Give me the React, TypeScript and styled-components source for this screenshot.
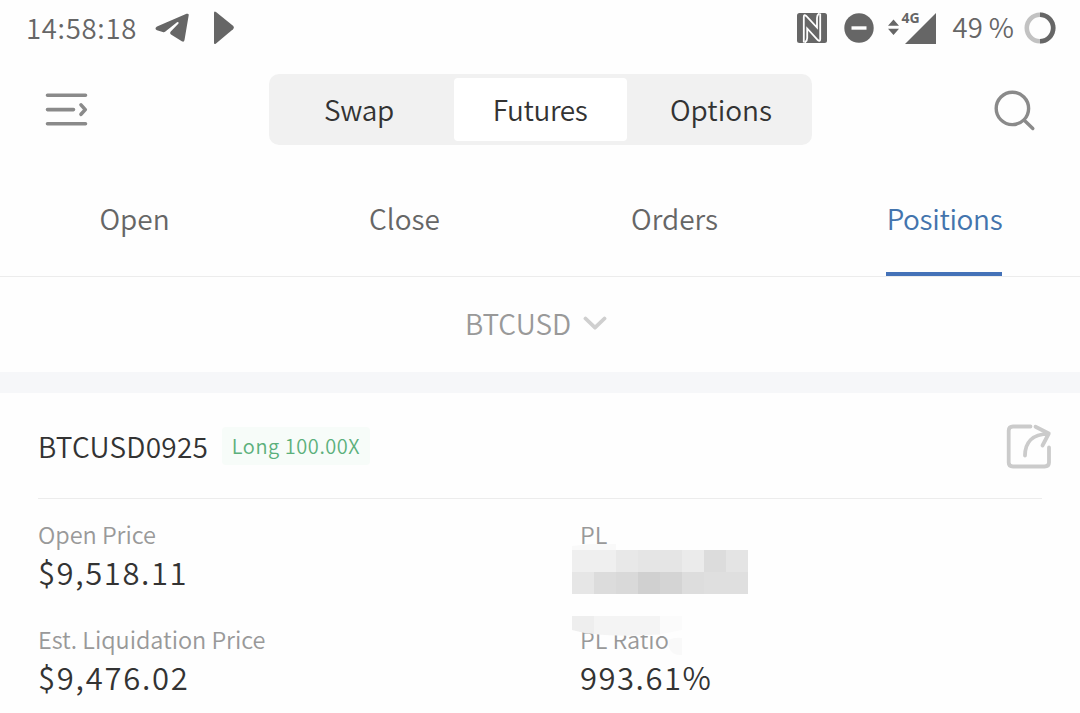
import React from 'react';
import styled, { createGlobalStyle } from 'styled-components';

const GlobalStyle = createGlobalStyle`
  * {
    box-sizing: border-box;
  }

  body {
    margin: 0;
    background: #fefefe;
    color: #333333;
    font-family: 'Noto Sans CJK SC', 'Open Sans', sans-serif;
  }

  svg {
    display: block;
    flex: none;
  }
`;

interface TextProps {
  $size: number;
  $color?: string;
  $spacing?: number;
  $weight?: number;
}

const Text = styled.span<TextProps>`
  font-size: ${props => props.$size}px;
  color: ${props => props.$color || '#333333'};
  letter-spacing: ${props => props.$spacing || 0}px;
  font-weight: ${props => props.$weight || 350};
  line-height: 1;
  white-space: nowrap;
`;

const Screen = styled.main`
  width: 1080px;
  height: 713px;
  overflow: hidden;
`;

const StatusBar = styled.header`
  display: flex;
  align-items: center;
  justify-content: space-between;
  height: 56px;
  padding: 0 24px 0 26px;
`;

const StatusGroup = styled.div`
  display: flex;
  align-items: center;
`;

const StatusItem = styled.div<{ $before: number }>`
  margin-left: ${props => props.$before}px;
`;

const Toolbar = styled.div`
  display: flex;
  align-items: center;
  justify-content: space-between;
  height: 107px;
  padding: 0 44px 0 44px;
`;

const Segments = styled.div`
  display: flex;
  justify-content: space-between;
  width: 543px;
  height: 71px;
  padding: 4px 0;
  margin-right: 4px;
  border-radius: 10px;
  background: #f1f1f1;
`;

const Segment = styled.button<{ $active?: boolean }>`
  flex: 0 0 ${props => (props.$active ? 173 : 181)}px;
  padding: 0;
  border: 0;
  border-radius: 4px;
  background: ${props => (props.$active ? '#ffffff' : 'transparent')};
  font-family: inherit;
`;

const Tabs = styled.nav`
  display: grid;
  grid-template-columns: repeat(4, 1fr);
  height: 114px;
  border-bottom: 1px solid #ececec;
`;

const Tab = styled.a<{ $active?: boolean }>`
  display: flex;
  justify-content: center;
  justify-self: center;
  width: 116px;
  margin-right: 2px;
  padding: 41px 0 0 1px;
  border-bottom: 4px solid ${props => (props.$active ? '#4472b8' : 'transparent')};
`;

const PairSelect = styled.div`
  display: flex;
  align-items: center;
  justify-content: center;
  gap: 12px;
  height: 95px;
  padding: 0 8px 3px 0;
`;

const Divider = styled.div`
  height: 21px;
  background: #f6f7f9;
`;

const Card = styled.section`
  padding: 0 38px;
`;

const CardHeader = styled.div`
  display: flex;
  align-items: center;
  height: 106px;
  border-bottom: 1px solid #ececec;
`;

const Contract = styled.div`
  display: flex;
  width: 184px;
  padding-top: 1px;
`;

const Badge = styled.span`
  display: flex;
  align-items: center;
  justify-content: center;
  width: 148px;
  height: 38px;
  border-radius: 4px;
  background: #f7fcf9;
`;

const ShareButton = styled.div`
  margin: 0 -10px 0 auto;
`;

const Metrics = styled.div`
  display: grid;
  grid-template-columns: 542px 1fr;
  grid-auto-rows: 105px;
  padding-top: 24px;
`;

const Metric = styled.div`
  position: relative;
  display: flex;
  flex-direction: column;
  gap: 9px;
`;

const Redaction = styled.svg`
  position: absolute;
  left: -20px;
  top: -5px;
`;

const MenuIcon = () => (
  <svg width="46" height="36" viewBox="0 0 46 36" fill="none" stroke="#8a8a8a" strokeWidth="3.6" strokeLinecap="round" strokeLinejoin="round">
    <path d="M3.5 3.2H41.5M3.5 17.6H29.5M3.5 31.8H41.5M37 12.9L41.3 17.6L37 22.3" />
  </svg>
);

const SearchIcon = () => (
  <svg width="42" height="42" viewBox="0 0 42 42" fill="none" stroke="#8a8a8a" strokeWidth="3.4" strokeLinecap="round">
    <circle cx="18.4" cy="19.4" r="16.2" />
    <path d="M30.5 31.5L38.8 39.5" />
  </svg>
);

const TelegramIcon = () => (
  <svg width="34" height="30" viewBox="0 0 34 30" fill="#666666">
    <path d="M2 13.5L31.5.8Q34 .2 33.7 2.2L29.5 27Q29 29.5 26.8 28.2L16 21.5Q14.4 20.2 15.8 18.6L23.3 10.7Q24.3 8.6 22 9.2L10.4 18.6Q9.2 19.6 7.7 19.1L2 17.2Q-1 15.4 2 13.5Z" />
  </svg>
);

const PlayIcon = () => (
  <svg width="22" height="34" viewBox="0 0 22 34" fill="#666666">
    <path d="M1 2Q1-.6 3 1L20 14.8Q21.8 16.6 20 18.2L3 32.5Q1 34 1 31.5Z" />
  </svg>
);

const NfcIcon = () => (
  <svg width="30" height="30" viewBox="0 0 30 30" fill="none">
    <rect width="30" height="30" rx="2.5" fill="#666666" />
    <g stroke="#fefefe" strokeWidth="1.8">
      <path d="M6.8 29.5V4C6.8 1.6 7.9 1.8 9.2 3L20 14.5V5C20 2.6 20.7 1.2 22.5 .4" />
      <path d="M23.2 .5V26C23.2 28.4 22.1 28.2 20.8 27L10.2 15.5V25C10.2 27.4 9.4 28.8 7.5 29.6" />
    </g>
  </svg>
);

const DndIcon = () => (
  <svg width="30" height="30" viewBox="0 0 30 30">
    <circle cx="15" cy="15" r="14.7" fill="#666666" />
    <path d="M7.5 15H22.5" stroke="#fefefe" strokeWidth="3.4" />
  </svg>
);

const SignalMark = styled.div`
  position: relative;
`;

const NetworkType = styled.span`
  position: absolute;
  left: 14px;
  top: -1px;
  color: #666666;
  font: 700 14px/15px 'Open Sans', sans-serif;
`;

const SignalIcon = () => (
  <SignalMark>
    <svg width="48" height="34" viewBox="0 0 48 34" fill="#666666">
      <path d="M5.5 8.5L11 14.7H0ZM5.5 24L0 17.8H11ZM48 2V33H17Z" />
    </svg>
    <NetworkType>4G</NetworkType>
  </SignalMark>
);

const BatteryRing = () => (
  <svg width="32" height="32" viewBox="0 0 32 32" fill="none" strokeWidth="4.6">
    <circle cx="16" cy="16" r="13.2" stroke="#c2c2c2" />
    <path d="M16 2.8A13.2 13.2 0 0 1 16 29.2" stroke="#666666" />
  </svg>
);

const ChevronIcon = () => (
  <svg width="24" height="16" viewBox="0 0 24 16" fill="none" stroke="#cfcfcf" strokeWidth="3.8" strokeLinecap="round" strokeLinejoin="round">
    <path d="M2.5 3.5L12 12.7L21.5 3.5" />
  </svg>
);

const ShareIcon = () => (
  <svg width="46" height="46" viewBox="0 0 46 46" fill="none" stroke="#cbcbcb" strokeWidth="3.8" strokeLinecap="round" strokeLinejoin="round">
    <path d="M24.5 3.5H7Q2.7 3.5 2.7 7.5V39.5Q2.7 43.5 7 43.5H38.5Q43 43.5 43 39.5V24.5" />
    <path d="M19 32.5C19 20 26 10.8 42.5 10.8M29.5 3.7L42.8 10.5L36.5 22.5" />
  </svg>
);

const cells = [
  ['#efefef', '#efefef', '#e8e8e8', '#e5e5e5', '#e5e5e5', '#ebebeb', '#dcdcdc', '#e4e4e4'],
  ['#e6e6e6', '#dcdcdc', '#d9d9d9', '#d0d0d0', '#d4d4d4', '#dddddd', '#dfdfdf', '#dfdfdf'],
];

const HiddenValue = () => (
  <Redaction width="200" height="140" viewBox="560 518 200 140">
    <path d="M572 546L590 544H616V550H572Z" fill="#f9f9f9" />
    {cells.map((row, y) =>
      row.map((fill, x) => (
        <rect key={`${x}-${y}`} x={572 + x * 22} y={550 + y * 22} width="22" height="22" fill={fill} />
      ))
    )}
  </Redaction>
);

const RatioCover = () => (
  <Redaction width="200" height="140" viewBox="560 623 200 140" overflow="visible">
    <path d="M572 616H594V634Q582 633 572 630Z" fill="#eeeeee" />
    <path d="M594 616H660V634.5Q620 637 594 634Z" fill="#f4f4f4" />
    <path d="M660 616H682V630L660 634.5Z" fill="#fbfbfb" />
    <path d="M668 640Q675 637 682 638V655Q668 656 668 640Z" fill="#f9f9f9" />
  </Redaction>
);

const metrics = [
  { label: 'Open Price', value: '$9,518.11', spacing: 1.6 },
  { label: 'PL', hidden: true },
  { label: 'Est. Liquidation Price', value: '$9,476.02', spacing: 1.75 },
  { label: 'PL Ratio', value: '993.61%', spacing: 1.5, covered: true },
];

const App: React.FC = () => {
  return (
    <Screen>
      <GlobalStyle />
      <StatusBar>
        <StatusGroup>
          <Text $size={27.5} $color="#666666" $spacing={0.7}>14:58:18</Text>
          <StatusItem $before={18}><TelegramIcon /></StatusItem>
          <StatusItem $before={24}><PlayIcon /></StatusItem>
        </StatusGroup>
        <StatusGroup>
          <NfcIcon />
          <StatusItem $before={17}><DndIcon /></StatusItem>
          <StatusItem $before={14}><SignalIcon /></StatusItem>
          <StatusItem $before={17}>
            <Text $size={27.5} $color="#666666">49 %</Text>
          </StatusItem>
          <StatusItem $before={10}><BatteryRing /></StatusItem>
        </StatusGroup>
      </StatusBar>
      <Toolbar>
        <MenuIcon />
        <Segments>
          <Segment><Text $size={28} $spacing={-0.3}>Swap</Text></Segment>
          <Segment $active><Text $size={28} $spacing={-0.4}>Futures</Text></Segment>
          <Segment><Text $size={28}>Options</Text></Segment>
        </Segments>
        <SearchIcon />
      </Toolbar>
      <Tabs>
        <Tab><Text $size={28} $color="#666666">Open</Text></Tab>
        <Tab><Text $size={28} $color="#666666">Close</Text></Tab>
        <Tab><Text $size={28} $color="#666666">Orders</Text></Tab>
        <Tab $active><Text $size={28} $color="#4374ad" $spacing={-0.35}>Positions</Text></Tab>
      </Tabs>
      <PairSelect>
        <Text $size={28} $color="#999999">BTCUSD</Text>
        <ChevronIcon />
      </PairSelect>
      <Divider />
      <Card>
        <CardHeader>
          <Contract><Text $size={28} $spacing={0.25}>BTCUSD0925</Text></Contract>
          <Badge><Text $size={20} $color="#5cb07c" $spacing={0.55}>Long 100.00X</Text></Badge>
          <ShareButton><ShareIcon /></ShareButton>
        </CardHeader>
        <Metrics>
          {metrics.map(item => (
            <Metric key={item.label}>
              <Text $size={23.5} $color="#999999" $spacing={-0.05}>{item.label}</Text>
              {item.value && <Text $size={31} $spacing={item.spacing}>{item.value}</Text>}
              {item.hidden && <HiddenValue />}
              {item.covered && <RatioCover />}
            </Metric>
          ))}
        </Metrics>
      </Card>
    </Screen>
  );
};

export default App;
